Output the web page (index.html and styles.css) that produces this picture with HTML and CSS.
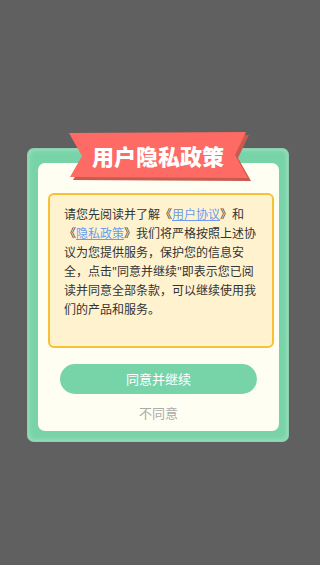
FILE: index.html
```html
<!DOCTYPE html>
<html lang="zh-CN">
<head>
<meta charset="utf-8">
<link rel="stylesheet" href="styles.css">
</head>
<body>
<div class="card">
  <div class="ribbon">
    <svg class="ribbon-bg" width="184" height="50" viewBox="0 0 184 50">
      <polygon points="4,4 181,3 170,26 183,49 5,48 17,27" fill="#c95a4e"/>
      <polygon points="1,1 178,0 167,23 180,46 2,45 14,24" fill="#fd6b64"/>
    </svg>
    <span class="ribbon-text">用户隐私政策</span>
  </div>
  <div class="panel">
    <div class="notice">请您先阅读并了解《<a class="link">用户协议</a>》和《<a class="link">隐私政策</a>》我们将严格按照上述协议为您提供服务，保护您的信息安全，点击"同意并继续"即表示您已阅读并同意全部条款，可以继续使用我们的产品和服务。</div>
    <div class="agree">同意并继续</div>
    <div class="disagree">不同意</div>
  </div>
</div>
</body>
</html>
```
FILE: styles.css
```css
html, body {
  margin: 0;
  padding: 0;
}
body {
  background: #606060;
  width: 320px;
  height: 565px;
  overflow: hidden;
  font-family: "Noto Sans", "Noto Sans CJK SC", sans-serif;
}
.card {
  position: relative;
  margin: 148px 0 0 27px;
  width: 262px;
  height: 294px;
  box-sizing: border-box;
  padding: 15px 10px 11px 11px;
  background: #78d3a8;
  border-radius: 7px;
  box-shadow: inset 0 0 0 1px rgba(0,0,0,0.06), inset 0 0 4px 2px rgba(255,255,255,0.3);
}
.ribbon {
  position: absolute;
  left: 41px;
  top: -16px;
  width: 184px;
  height: 50px;
  z-index: 2;
}
.ribbon-bg {
  position: absolute;
  left: 0;
  top: 0;
}
.ribbon-text {
  position: absolute;
  left: 0;
  top: 9px;
  width: 180px;
  text-align: center;
  color: #fff;
  font-family: "Noto Sans CJK SC", sans-serif;
  font-weight: 900;
  font-size: 22px;
  line-height: 28px;
}
.panel {
  height: 268px;
  box-sizing: border-box;
  padding-top: 30px;
  background: #fffef2;
  border-radius: 7px;
  display: flex;
  flex-direction: column;
}
.notice {
  margin-left: 10px;
  width: 226px;
  height: 155px;
  box-sizing: border-box;
  padding: 10px 13px 0 14px;
  background: #fff2cf;
  border: 2px solid #f7c136;
  border-radius: 6px;
  color: #333;
  font-size: 12px;
  line-height: 19px;
}
.link {
  color: #6a9bef;
  text-decoration: underline;
}
.agree {
  margin: 16px 0 0 22px;
  width: 197px;
  height: 30px;
  border-radius: 15px;
  background: #77d4a8;
  color: #fff;
  font-size: 13px;
  line-height: 30px;
  text-align: center;
}
.disagree {
  margin: 10px 0 0 22px;
  width: 197px;
  text-align: center;
  color: #ababab;
  font-size: 13px;
  line-height: 18px;
}
```
